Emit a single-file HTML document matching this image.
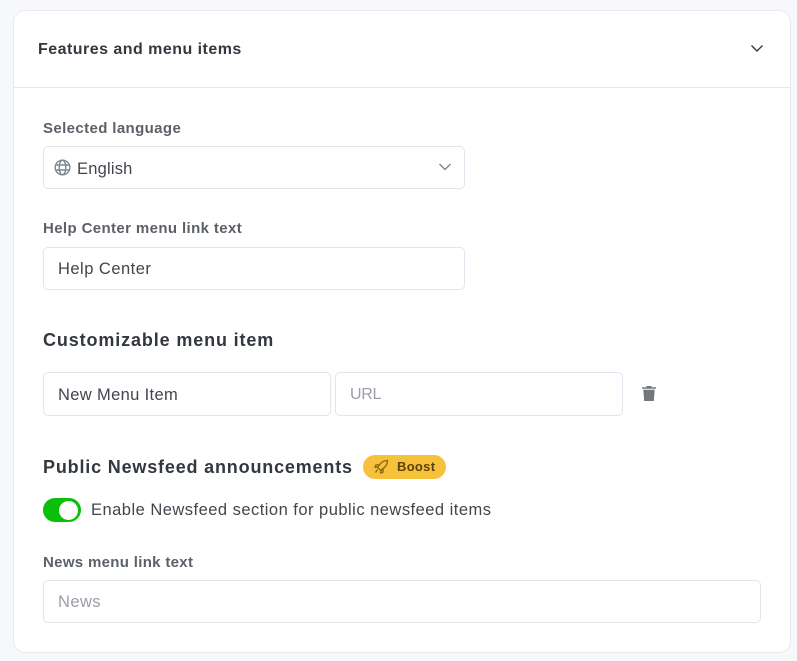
<!DOCTYPE html>
<html>
<head>
<meta charset="utf-8">
<style>
html,body{margin:0;padding:0;width:797px;height:661px;overflow:hidden;background:#f7f8fb;font-family:"Liberation Sans",sans-serif;}
.card{position:absolute;left:13px;top:10px;width:776px;height:641px;background:#fff;border:1px solid #e8eaf0;border-radius:12px;}
.hr{position:absolute;left:14px;top:87px;width:776px;height:1px;background:#e6e8ee;}
.t{position:absolute;white-space:nowrap;line-height:20px;}
.h{font-weight:700;color:#33383f;}
.lab{font-size:15px;font-weight:700;color:#5c6168;}
.val{font-size:16.5px;color:#41464d;}
.ph{font-size:16.5px;color:#9a9ea5;}
.in{position:absolute;background:#fff;border:1px solid #e2e5ee;border-radius:5px;box-sizing:border-box;}
svg{position:absolute;}
</style>
</head>
<body>
<div class="card"></div>
<div class="hr"></div>
<div class="t h" style="left:38px;top:40px;font-size:16px;letter-spacing:.47px">Features and menu items</div>
<svg style="left:750px;top:43px" width="14" height="11" viewBox="0 0 14 11"><path d="M1.500 2.500L7 8l5.500-5.500" fill="none" stroke="#33383f" stroke-width="1.400"/></svg>

<div class="t lab" style="left:43px;top:119px;letter-spacing:.38px">Selected language</div>
<div class="in" style="left:43px;top:146px;width:422px;height:43px"></div>
<svg style="left:54px;top:159px" width="17" height="17" viewBox="0 0 17 17" fill="none" stroke="#7f8794" stroke-width="1.400"><circle cx="8.500" cy="8.500" r="7.300"/><ellipse cx="8.500" cy="8.500" rx="3.300" ry="7.300"/><path d="M1.600 6h13.800M1.600 11h13.800"/></svg>
<div class="t val" style="left:77px;top:158.500px;letter-spacing:.2px">English</div>
<svg style="left:438px;top:162px" width="14" height="11" viewBox="0 0 14 11"><path d="M1.500 2L7 7.500 12.500 2" fill="none" stroke="#7f8590" stroke-width="1.400"/></svg>

<div class="t lab" style="left:43px;top:219px;letter-spacing:.38px">Help Center menu link text</div>
<div class="in" style="left:43px;top:247px;width:422px;height:43px"></div>
<div class="t val" style="left:58px;top:259px;letter-spacing:.48px">Help Center</div>

<div class="t h" style="left:43px;top:330px;font-size:18px;letter-spacing:.87px">Customizable menu item</div>
<div class="in" style="left:43px;top:372px;width:288px;height:44px"></div>
<div class="t val" style="left:58px;top:385px;letter-spacing:.35px">New Menu Item</div>
<div class="in" style="left:335px;top:372px;width:288px;height:44px"></div>
<div class="t ph" style="left:350px;top:385px;font-size:16px;letter-spacing:-.3px">URL</div>
<svg style="left:641px;top:385px" width="16" height="17" viewBox="0 0 16 17"><path d="M5.500 2.200V1h5v1.200h4.500v1.600H1V2.200zM2.300 4.800h11.400l-.9 11.200H3.200z" fill="#72767d"/></svg>

<div class="t h" style="left:43px;top:457px;font-size:18px;letter-spacing:.82px">Public Newsfeed announcements</div>
<div style="position:absolute;left:363px;top:455px;width:83px;height:24px;border-radius:12px;background:#f7c13c"></div>
<svg style="left:374px;top:459px" width="15" height="15" viewBox="0 0 15 15" fill="none" stroke="#8a6410" stroke-width="1.300"><path d="M5 9.800L3.600 8.200 6 5.200C8 2.800 10.500 1.600 13.500 1.500 13.400 4.500 12.200 7 9.800 9 L6.800 11.400z"/><path d="M4.800 5.800L2 6 1 8.300l2.600-.2M9.200 10.200L9 13l-2.300 1 .2-2.600M3.500 10.500L1.500 13.500"/></svg>
<div class="t" style="left:397px;top:457px;font-size:13px;font-weight:700;color:#5a4208;letter-spacing:.3px">Boost</div>

<div style="position:absolute;left:43px;top:498px;width:38px;height:24px;border-radius:12px;background:#0abf0a"></div>
<div style="position:absolute;left:59px;top:501px;width:19px;height:19px;border-radius:50%;background:#fff"></div>
<div class="t val" style="left:91px;top:500px;letter-spacing:.48px">Enable Newsfeed section for public newsfeed items</div>

<div class="t lab" style="left:43px;top:553px;letter-spacing:.32px">News menu link text</div>
<div class="in" style="left:43px;top:580px;width:718px;height:43px"></div>
<div class="t ph" style="left:58px;top:592px;letter-spacing:.43px">News</div>
</body>
</html>
